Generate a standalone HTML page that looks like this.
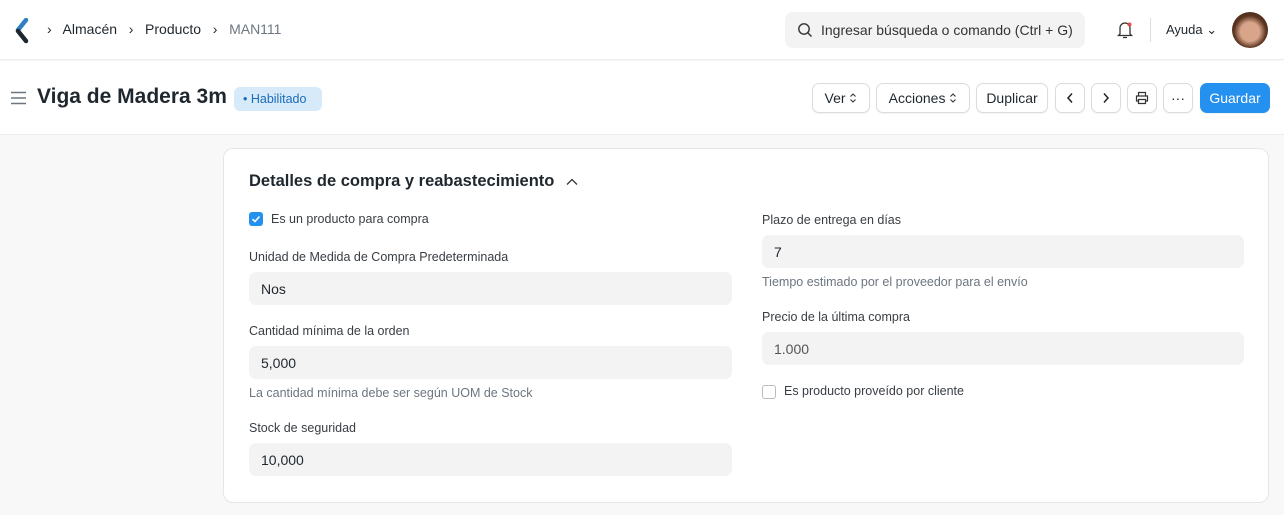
<!DOCTYPE html>
<html><head><meta charset="utf-8"><style>
*{box-sizing:border-box;margin:0;padding:0}
body{width:1284px;height:515px;overflow:hidden;background:#f8f8f8;font-family:"Liberation Sans",sans-serif;color:#1f272e;position:relative}
.nav{position:absolute;left:0;top:0;width:1284px;height:60px;background:#fff;border-bottom:1px solid #ececec}
.abs{position:absolute}
.head{position:absolute;left:0;top:61px;width:1284px;height:74px;background:#fff;border-bottom:1px solid #ededed}
.btn{position:absolute;top:83px;height:30px;border:1px solid #dcdcdc;border-radius:7px;background:#fff;font-size:14px;display:flex;align-items:center;justify-content:center;box-shadow:0 1px 1px rgba(0,0,0,.05)}
.card{position:absolute;left:223px;top:148px;width:1046px;height:355px;background:#fff;border:1px solid #e6e6e6;border-radius:10px}
.lbl{position:absolute;font-size:12.5px;color:#383e44}
.inp{position:absolute;height:33px;background:#f3f3f4;border-radius:7px;font-size:14px;padding:9px 12px;color:#1f272e}
.hint{position:absolute;font-size:12.5px;color:#6c7680}
</style></head><body>
<div class="nav">
  <svg class="abs" style="left:14px;top:18px" width="16" height="26" viewBox="0 0 16 26"><path d="M12 2 L4 12" stroke="#2e7fc4" stroke-width="4.5" stroke-linecap="round"/><path d="M4 13 L12 23" stroke="#1f272e" stroke-width="4.5" stroke-linecap="round"/></svg>
  <div class="abs" style="left:47px;top:21px;font-size:14px;color:#1f272e">›&nbsp;&nbsp; Almacén &nbsp;&nbsp;›&nbsp;&nbsp; Producto &nbsp;&nbsp;›&nbsp;&nbsp; <span style="color:#6c7680">MAN111</span></div>
  <div class="abs" style="left:785px;top:12px;width:300px;height:36px;background:#f3f3f4;border-radius:8px"></div>
  <svg class="abs" style="left:797px;top:22px" width="16" height="16" viewBox="0 0 16 16"><circle cx="7" cy="7" r="5.2" fill="none" stroke="#333" stroke-width="1.4"/><path d="M11 11 L14.5 14.5" stroke="#333" stroke-width="1.4"/></svg>
  <div class="abs" style="left:821px;top:22px;font-size:14px;color:#333">Ingresar búsqueda o comando (Ctrl + G)</div>
  <svg class="abs" style="left:1116px;top:20px" width="18" height="20" viewBox="0 0 18 20"><path d="M4 14 V8 a5 5 0 0 1 10 0 V14 L15.5 15.5 H2.5Z M7 17.5 h4" fill="none" stroke="#333" stroke-width="1.3"/><circle cx="13.5" cy="4.5" r="2" fill="#e24c4c"/></svg>
  <div class="abs" style="left:1150px;top:18px;width:1px;height:24px;background:#ddd"></div>
  <div class="abs" style="left:1166px;top:22px;font-size:13px;color:#1f272e">Ayuda ⌄</div>
  <div class="abs" style="left:1232px;top:12px;width:36px;height:36px;border-radius:50%;background:radial-gradient(circle at 50% 55%,#d9a58a 0 35%,#5a3420 60%,#3a2418 100%)"></div>
</div>
<div class="head">
  <svg class="abs" style="left:11px;top:30px" width="16" height="14" viewBox="0 0 16 14"><path d="M0 1.5h15M0 7h15M0 12.5h15" stroke="#6c7680" stroke-width="1.6"/></svg>
  <div class="abs" style="left:37px;top:24px;font-size:21px;font-weight:bold;color:#1f272e">Viga de Madera 3m</div>
  <div class="abs" style="left:234px;top:26px;width:88px;height:24px;background:#d6eaf9;border-radius:6px;color:#1c6cb8;font-size:12.5px;padding:5px 0 0 9px">• Habilitado</div>
</div>
<div class="btn" style="left:812px;width:58px">Ver&nbsp;<svg width="8" height="12" viewBox="0 0 8 12"><path d="M1.5 4.5 L4 2 L6.5 4.5 M1.5 7.5 L4 10 L6.5 7.5" fill="none" stroke="#333" stroke-width="1.1"/></svg></div>
<div class="btn" style="left:876px;width:94px">Acciones&nbsp;<svg width="8" height="12" viewBox="0 0 8 12"><path d="M1.5 4.5 L4 2 L6.5 4.5 M1.5 7.5 L4 10 L6.5 7.5" fill="none" stroke="#333" stroke-width="1.1"/></svg></div>
<div class="btn" style="left:976px;width:72px">Duplicar</div>
<div class="btn" style="left:1055px;width:30px"><svg width="10" height="12" viewBox="0 0 10 12"><path d="M7 1.5 L3 6 L7 10.5" fill="none" stroke="#222" stroke-width="1.5"/></svg></div>
<div class="btn" style="left:1091px;width:30px"><svg width="10" height="12" viewBox="0 0 10 12"><path d="M3 1.5 L7 6 L3 10.5" fill="none" stroke="#222" stroke-width="1.5"/></svg></div>
<div class="btn" style="left:1127px;width:30px"><svg width="14" height="14" viewBox="0 0 14 14"><path d="M3.5 5V1.5h7V5M3.5 10H1.5V5h11v5h-2M3.5 8.5h7v4h-7z" fill="none" stroke="#333" stroke-width="1.2"/></svg></div>
<div class="btn" style="left:1163px;width:30px">···</div>
<div class="btn" style="left:1200px;width:70px;background:#2490ef;border-color:#2490ef;color:#fff">Guardar</div>
<div class="card"></div>
<div class="abs" style="left:249px;top:172px;font-size:16.5px;font-weight:bold">Detalles de compra y reabastecimiento</div>
<svg class="abs" style="left:566px;top:178px" width="12" height="8" viewBox="0 0 12 8"><path d="M1 6.5 L6 1.5 L11 6.5" fill="none" stroke="#333" stroke-width="1.3"/></svg>
<div class="abs" style="left:249px;top:212px;width:14px;height:14px;background:#2490ef;border-radius:3px"><svg width="14" height="14" viewBox="0 0 14 14"><path d="M3.5 7.2 L6 9.5 L10.5 4.5" fill="none" stroke="#fff" stroke-width="1.6"/></svg></div>
<div class="lbl" style="left:271px;top:212px">Es un producto para compra</div>
<div class="lbl" style="left:249px;top:250px">Unidad de Medida de Compra Predeterminada</div>
<div class="inp" style="left:249px;top:272px;width:483px">Nos</div>
<div class="lbl" style="left:249px;top:324px">Cantidad mínima de la orden</div>
<div class="inp" style="left:249px;top:346px;width:483px">5,000</div>
<div class="hint" style="left:249px;top:386px">La cantidad mínima debe ser según UOM de Stock</div>
<div class="lbl" style="left:249px;top:421px">Stock de seguridad</div>
<div class="inp" style="left:249px;top:443px;width:483px">10,000</div>
<div class="lbl" style="left:762px;top:213px">Plazo de entrega en días</div>
<div class="inp" style="left:762px;top:235px;width:482px">7</div>
<div class="hint" style="left:762px;top:275px">Tiempo estimado por el proveedor para el envío</div>
<div class="lbl" style="left:762px;top:310px">Precio de la última compra</div>
<div class="inp" style="left:762px;top:332px;width:482px;color:#555">1.000</div>
<div class="abs" style="left:762px;top:385px;width:14px;height:14px;border:1px solid #bbb;border-radius:3px;background:#fff"></div>
<div class="lbl" style="left:784px;top:384px">Es producto proveído por cliente</div>
</body></html>
